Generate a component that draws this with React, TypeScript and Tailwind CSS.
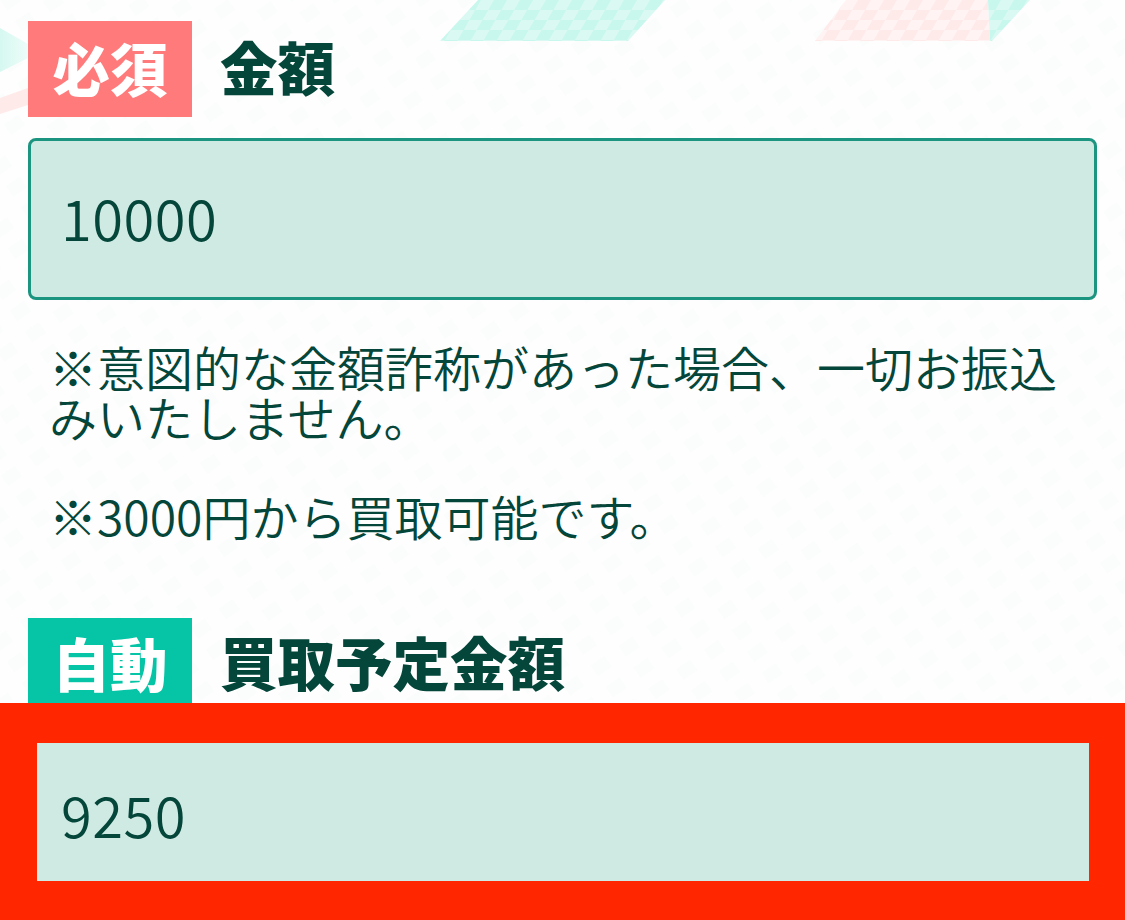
export default function App() {
  const font = { fontFamily: '"Noto Sans CJK JP", sans-serif' };
  return (
    <div style={font} className="relative w-[1125px] h-[920px] overflow-hidden bg-[#fefefe] text-[#04463a]">
      <svg className="absolute left-0 top-0" width="1125" height="700" viewBox="0 0 1125 700" aria-hidden="true">
        <defs>
          <pattern id="t" width="26" height="20" patternUnits="userSpaceOnUse" patternTransform="skewX(-30)">
            <rect width="26" height="20" fill="#d9f9f2" />
            <rect width="13" height="10" fill="#c8f7ed" />
            <rect x="13" y="10" width="13" height="10" fill="#c8f7ed" />
          </pattern>
          <pattern id="p" width="26" height="20" patternUnits="userSpaceOnUse" patternTransform="skewX(-30)">
            <rect width="26" height="20" fill="#fff3f3" />
            <rect width="13" height="10" fill="#ffeaea" />
            <rect x="13" y="10" width="13" height="10" fill="#ffeaea" />
          </pattern>
          <pattern id="n" width="34" height="26" patternUnits="userSpaceOnUse" patternTransform="rotate(-35)">
            <rect width="17" height="13" fill="#fbfcfc" />
          </pattern>
          <linearGradient id="l" x1="0" y1="0" x2="1" y2="0">
            <stop offset="0" stopColor="#d5f8f0" />
            <stop offset="1" stopColor="#eefcf9" />
          </linearGradient>
        </defs>
        <rect width="1125" height="700" fill="url(#n)" />
        <polygon points="478,0 665,0 628,41 440,41" fill="url(#t)" />
        <polygon points="846,0 988,0 990,41 815,41" fill="url(#p)" />
        <polygon points="988,0 1030,0 992,41 990,41" fill="url(#t)" />
        <polygon points="0,28 28,44 28,58 0,72" fill="url(#l)" />
        <polygon points="0,98 28,88 28,105 0,114" fill="#ffeaea" />
      </svg>
      <div className="relative pt-[21px] px-[28px]">
        <div className="flex items-center gap-[28px]">
          <span className="flex w-[164px] h-[96px] pb-[3px] items-center justify-center bg-[#ff7b7b] text-white text-[57.5px] font-black leading-none">必須</span>
          <span className="pb-[4px] text-[57.5px] font-black leading-none">金額</span>
        </div>
        <div className="mt-[21px] flex h-[162px] w-[1069px] items-center rounded-lg border-[3px] border-[#1b9480] bg-[#cfe9e3] pb-[4px] pl-[30px] text-[56px] font-[350] tracking-[0.5px]">10000</div>
        <div className="mt-[41px] pl-[21px] pr-[20px] text-[48px] font-[350] leading-[50px]">
          <p>※意図的な金額詐称があった場合、一切お振込みいたしません。</p>
          <p className="mt-[49px]">※3000円から買取可能です。</p>
        </div>
        <div className="mt-[78px] flex items-start gap-[28px]">
          <span className="flex w-[164px] h-[96px] pb-[7px] items-center justify-center bg-[#06c4a6] text-white text-[57.5px] font-black leading-none">自動</span>
          <span className="mt-[15px] text-[57.5px] font-black leading-none">買取予定金額</span>
        </div>
      </div>
      <div className="absolute inset-x-0 bottom-0 h-[217px] bg-[#ff2600] pt-[40px] pl-[37px] pr-[36px]">
        <div className="flex h-[138px] items-center bg-[#cfe9e3] pl-[24px] pt-[3px] text-[56px] font-[350] tracking-[0.5px]">9250</div>
      </div>
    </div>
  );
}
